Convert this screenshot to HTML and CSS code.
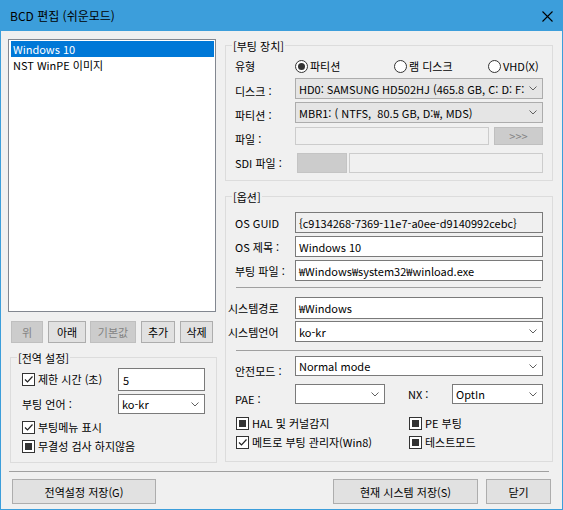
FILE: index.html
```html
<!DOCTYPE html>
<html lang="ko">
<head>
<meta charset="utf-8">
<title>BCD 편집 (쉬운모드)</title>
<link rel="stylesheet" href="styles.css">
</head>
<body>
<div class="window">
  <div class="titlebar">
    <span class="title">BCD 편집 (쉬운모드)</span>
    <svg class="close" width="11" height="11" viewBox="0 0 11 11"><path d="M0.5 0.5L10.5 10.5M10.5 0.5L0.5 10.5" stroke="#000" stroke-width="1.1" fill="none"/></svg>
  </div>
  <div class="content">
    <div class="main">
      <div class="left">
        <div class="listbox">
          <div class="item sel">Windows 10</div>
          <div class="item">NST WinPE 이미지</div>
        </div>
        <div class="btnrow">
          <div class="btn dis b-up">위</div>
          <div class="btn b-down">아래</div>
          <div class="btn dis b-def">기본값</div>
          <div class="btn b-add">추가</div>
          <div class="btn b-del">삭제</div>
        </div>
        <div class="group global">
          <div class="legend">[전역 설정]</div>
          <div class="grow g-timeout">
            <div class="chkline glabel"><span class="chk"><svg width="11" height="11" viewBox="0 0 11 11"><path d="M2 5.5L4.5 8L9.5 2.5" stroke="#222" stroke-width="1.2" fill="none"/></svg></span>제한 시간 (초)</div>
            <div class="edit gctl">5</div>
          </div>
          <div class="grow g-lang">
            <div class="glabel lbl-pad">부팅 언어 :</div>
            <div class="combo gctl"><span class="ctext">ko-kr</span><svg class="chev" width="8" height="5" viewBox="0 0 8 5"><path d="M0.5 0.5L4 4L7.5 0.5" stroke="#606060" fill="none"/></svg></div>
          </div>
          <div class="grow g-menu">
            <div class="chkline"><span class="chk"><svg width="11" height="11" viewBox="0 0 11 11"><path d="M2 5.5L4.5 8L9.5 2.5" stroke="#222" stroke-width="1.2" fill="none"/></svg></span>부팅메뉴 표시</div>
          </div>
          <div class="grow g-integ">
            <div class="chkline"><span class="chk ind"></span>무결성 검사 하지않음</div>
          </div>
        </div>
      </div>
      <div class="right">
        <div class="group boot">
          <div class="legend">[부팅 장치]</div>
          <div class="row r-type">
            <div class="lbl">유형</div>
            <div class="radios">
              <div class="ropt o1"><span class="radio on"></span>파티션</div>
              <div class="ropt o2"><span class="radio"></span>램 디스크</div>
              <div class="ropt o3"><span class="radio"></span>VHD(X)</div>
            </div>
          </div>
          <div class="row r-disk">
            <div class="lbl low">디스크 :</div>
            <div class="dcombo ctl"><span class="ctext">HD0: SAMSUNG HD502HJ (465.8 GB, C: D: F: (</span><svg class="chev" width="8" height="5" viewBox="0 0 8 5"><path d="M0.5 0.5L4 4L7.5 0.5" stroke="#606060" fill="none"/></svg></div>
          </div>
          <div class="row r-part">
            <div class="lbl low">파티션 :</div>
            <div class="dcombo ctl"><span class="ctext">MBR1: ( NTFS,&nbsp; 80.5 GB, D:₩, MDS)</span><svg class="chev" width="8" height="5" viewBox="0 0 8 5"><path d="M0.5 0.5L4 4L7.5 0.5" stroke="#606060" fill="none"/></svg></div>
          </div>
          <div class="row r-file">
            <div class="lbl low">파일 :</div>
            <div class="ctl fileline">
              <div class="edit off fileedit"></div>
              <div class="btn dis browse">&gt;&gt;&gt;</div>
            </div>
          </div>
          <div class="row r-sdi">
            <div class="lbl">SDI 파일 :</div>
            <div class="ctl sdiline">
              <div class="graybox"></div>
              <div class="edit off sdiedit"></div>
            </div>
          </div>
        </div>
        <div class="group opts">
          <div class="legend">[옵션]</div>
          <div class="row r-guid">
            <div class="lbl">OS GUID</div>
            <div class="edit ro ctl">{c9134268-7369-11e7-a0ee-d9140992cebc}</div>
          </div>
          <div class="row r-title">
            <div class="lbl">OS 제목 :</div>
            <div class="edit ctl">Windows 10</div>
          </div>
          <div class="row r-bfile">
            <div class="lbl">부팅 파일 :</div>
            <div class="edit ctl">₩Windows₩system32₩winload.exe</div>
          </div>
          <div class="hsep s1"></div>
          <div class="row r-spath">
            <div class="lbl wide">시스템경로</div>
            <div class="edit ctl">₩Windows</div>
          </div>
          <div class="row r-slang">
            <div class="lbl wide">시스템언어</div>
            <div class="combo ctl"><span class="ctext">ko-kr</span><svg class="chev" width="8" height="5" viewBox="0 0 8 5"><path d="M0.5 0.5L4 4L7.5 0.5" stroke="#606060" fill="none"/></svg></div>
          </div>
          <div class="hsep s2"></div>
          <div class="row r-safe">
            <div class="lbl lower">안전모드 :</div>
            <div class="combo ctl"><span class="ctext">Normal mode</span><svg class="chev" width="8" height="5" viewBox="0 0 8 5"><path d="M0.5 0.5L4 4L7.5 0.5" stroke="#606060" fill="none"/></svg></div>
          </div>
          <div class="row r-pae">
            <div class="lbl lower">PAE :</div>
            <div class="combo pae"><span class="ctext"></span><svg class="chev" width="8" height="5" viewBox="0 0 8 5"><path d="M0.5 0.5L4 4L7.5 0.5" stroke="#606060" fill="none"/></svg></div>
            <div class="nxlbl lower">NX :</div>
            <div class="combo nx"><span class="ctext">OptIn</span><svg class="chev" width="8" height="5" viewBox="0 0 8 5"><path d="M0.5 0.5L4 4L7.5 0.5" stroke="#606060" fill="none"/></svg></div>
          </div>
          <div class="row chkrow r-hal">
            <div class="chkline c1"><span class="chk ind"></span>HAL 및 커널감지</div>
            <div class="chkline"><span class="chk ind"></span>PE 부팅</div>
          </div>
          <div class="row chkrow r-metro">
            <div class="chkline c1"><span class="chk"><svg width="11" height="11" viewBox="0 0 11 11"><path d="M2 5.5L4.5 8L9.5 2.5" stroke="#222" stroke-width="1.2" fill="none"/></svg></span>메트로 부팅 관리자(Win8)</div>
            <div class="chkline"><span class="chk ind"></span>테스트모드</div>
          </div>
        </div>
      </div>
    </div>
    <div class="hsep footsep"></div>
    <div class="footer">
      <div class="btn fb1">전역설정 저장(G)</div>
      <div class="btn fb2">현재 시스템 저장(S)</div>
      <div class="btn fb3">닫기</div>
    </div>
  </div>
</div>
</body>
</html>
```

FILE: styles.css
```css
* { box-sizing: border-box; }
html, body { margin: 0; padding: 0; background: #ffffff; }
body {
  font-family: "Noto Sans CJK KR", "Noto Sans", sans-serif;
  font-size: 11px;
  color: #000;
}
.window {
  width: 563px;
  height: 510px;
  background: #f0f0f0;
  border: 1px solid #3c9edb;
  display: flex;
  flex-direction: column;
}
.titlebar {
  height: 30px;
  flex: none;
  background: #3c9edb;
  display: flex;
  align-items: center;
  justify-content: space-between;
  padding: 0 9px 0 9px;
}
.title { font-size: 12px; line-height: 16px; }
.close { display: block; }

.content { flex: 1; padding: 8px 0 0 7px; display: flex; flex-direction: column; }
.main { display: flex; height: 424px; flex: none; }
.left { width: 209px; display: flex; flex-direction: column; }
.right { width: 328px; margin-left: 8px; display: flex; flex-direction: column; }

/* list */
.listbox {
  width: 208px; height: 273px;
  background: #fff;
  border: 1px solid #828790;
  padding: 1px 1px 1px 2px;
}
.item { height: 16px; line-height: 16px; padding-left: 2px; white-space: nowrap; }
.item.sel { background: #0078d7; color: #fff; }

/* buttons */
.btn {
  background: #e1e1e1;
  border: 1px solid #adadad;
  display: flex; align-items: center; justify-content: center;
  white-space: nowrap;
}
.btn.dis { background: #cccccc; border-color: #bfbfbf; color: #838383; }
.btnrow { display: flex; height: 22px; margin-top: 9px; padding-left: 3px; }
.btnrow .btn { height: 22px; }
.b-up { width: 32px; }
.b-down { width: 38px; margin-left: 5px; }
.b-def { width: 46px; margin-left: 4px; }
.b-add { width: 34px; margin-left: 5px; }
.b-del { width: 33px; margin-left: 5px; }

/* groups */
.group {
  border: 1px solid #dcdcdc;
  display: flex; flex-direction: column;
}
.legend {
  align-self: flex-start;
  line-height: 14px; height: 14px;
  margin-top: -7px;
  margin-left: 6px;
  padding: 0 1px;
  background: #f0f0f0;
  white-space: nowrap;
}
.global { margin: 14px 0 0 2px; width: 207px; height: 106px; }
.global .legend { margin-left: 6px; }
.grow { display: flex; align-items: center; padding-left: 11px; }
.glabel { width: 96px; flex: none; }
.gctl { width: 87px; }
.g-timeout { margin-top: 3px; height: 23px; }
.g-timeout .edit { height: 23px; padding-left: 4px; }
.g-lang { margin-top: 3px; height: 20px; }
.g-lang .combo { height: 20px; }
.g-menu { margin-top: 7px; height: 13px; }
.g-integ { margin-top: 6px; height: 13px; }

.boot { margin-top: 6px; height: 136px; }
.opts { margin-top: 15px; height: 266px; }

.row { display: flex; align-items: center; padding: 0 9px; }
.lbl { width: 60px; flex: none; white-space: nowrap; }
.lbl.low { padding-top: 5px; }
.lbl.lower { padding-top: 9px; }
.lbl.wide { margin-left: -7px; width: 67px; }
.ctl { flex: 1; min-width: 0; }

.r-type { margin-top: 5px; height: 16px; }
.r-disk { margin-top: 4px; height: 21px; }
.r-part { margin-top: 3px; height: 21px; }
.r-file { margin-top: 4px; height: 18px; }
.r-sdi { margin-top: 8px; height: 20px; }
.r-disk .ctl, .r-part .ctl { height: 21px; }
.r-file .ctl, .r-sdi .ctl { height: 100%; display: flex; }

.r-guid { margin-top: 8px; height: 21px; }
.r-title { margin-top: 3px; height: 21px; }
.r-bfile { margin-top: 3px; height: 21px; }
.r-spath { margin-top: 9px; height: 22px; }
.r-slang { margin-top: 2px; height: 21px; }
.r-safe { margin-top: 5px; height: 20px; }
.r-pae { margin-top: 8px; height: 20px; }
.r-hal { margin-top: 13px; height: 13px; }
.r-metro { margin-top: 6px; height: 13px; }
.row .edit, .row .combo { height: 100%; }

.hsep { height: 1px; background: #a0a0a0; flex: none; }
.s1 { margin: 6px 11px 0 10px; }
.s2 { margin: 8px 11px 0 10px; }

/* radios */
.radios { display: flex; flex: 1; }
.ropt { display: flex; align-items: center; white-space: nowrap; }
.o1 { width: 99px; }
.o2 { width: 94px; }
.radio {
  width: 13px; height: 13px; flex: none;
  border: 1px solid #333; border-radius: 50%;
  background: #fff;
  display: inline-flex; align-items: center; justify-content: center;
  margin-right: 2px;
}
.radio.on::after { content: ""; width: 7px; height: 7px; border-radius: 50%; background: #333; }

/* checkbox */
.chkline { display: flex; align-items: center; white-space: nowrap; line-height: 13px; }
.chk {
  width: 13px; height: 13px; flex: none;
  border: 1px solid #333; background: #fff;
  display: inline-flex; align-items: center; justify-content: center;
  margin-right: 3px;
}
.chk svg { display: block; }
.chk.ind::after { content: ""; width: 7px; height: 7px; background: #333; }
.chkrow { padding-left: 10px; }
.c1 { width: 173px; }

/* edits & combos */
.edit {
  background: #fff;
  border: 1px solid #7a7a7a;
  padding-left: 3px;
  display: flex; align-items: center;
  white-space: nowrap; overflow: hidden;
}
.edit.ro { background: #f0f0f0; }
.edit.off { background: #f0f0f0; border-color: #cccccc; }
.combo, .dcombo {
  border: 1px solid #7a7a7a;
  background: #fff;
  display: flex; align-items: center;
  padding: 0 5px 0 3px;
  white-space: nowrap; overflow: hidden;
}
.dcombo { background: #e5e5e5; border-color: #acacac; }
.ctext { flex: 1; min-width: 0; overflow: hidden; }
.chev { flex: none; display: block; margin-left: 2px; }
.pae { width: 90px; flex: none; }
.nxlbl { width: 44px; margin-left: 23px; flex: none; }
.nx { flex: 1; }

.fileedit { flex: 1; height: 18px; }
.browse { width: 49px; margin-left: 5px; height: 18px; color: #a0a0a0; }
.graybox { width: 50px; height: 20px; margin-left: 2px; background: #cccccc; border: 1px solid #c4c4c4; }
.sdiedit { flex: 1; margin-left: 2px; height: 20px; }

/* footer */
.footsep { margin: 8px 0 0 1px; width: 540px; }
.footer { display: flex; margin-top: 7px; height: 25px; }
.footer .btn { height: 25px; }
.fb1 { width: 144px; margin-left: 4px; }
.fb2 { width: 145px; margin-left: 177px; }
.fb3 { width: 65px; margin-left: 8px; }
```
